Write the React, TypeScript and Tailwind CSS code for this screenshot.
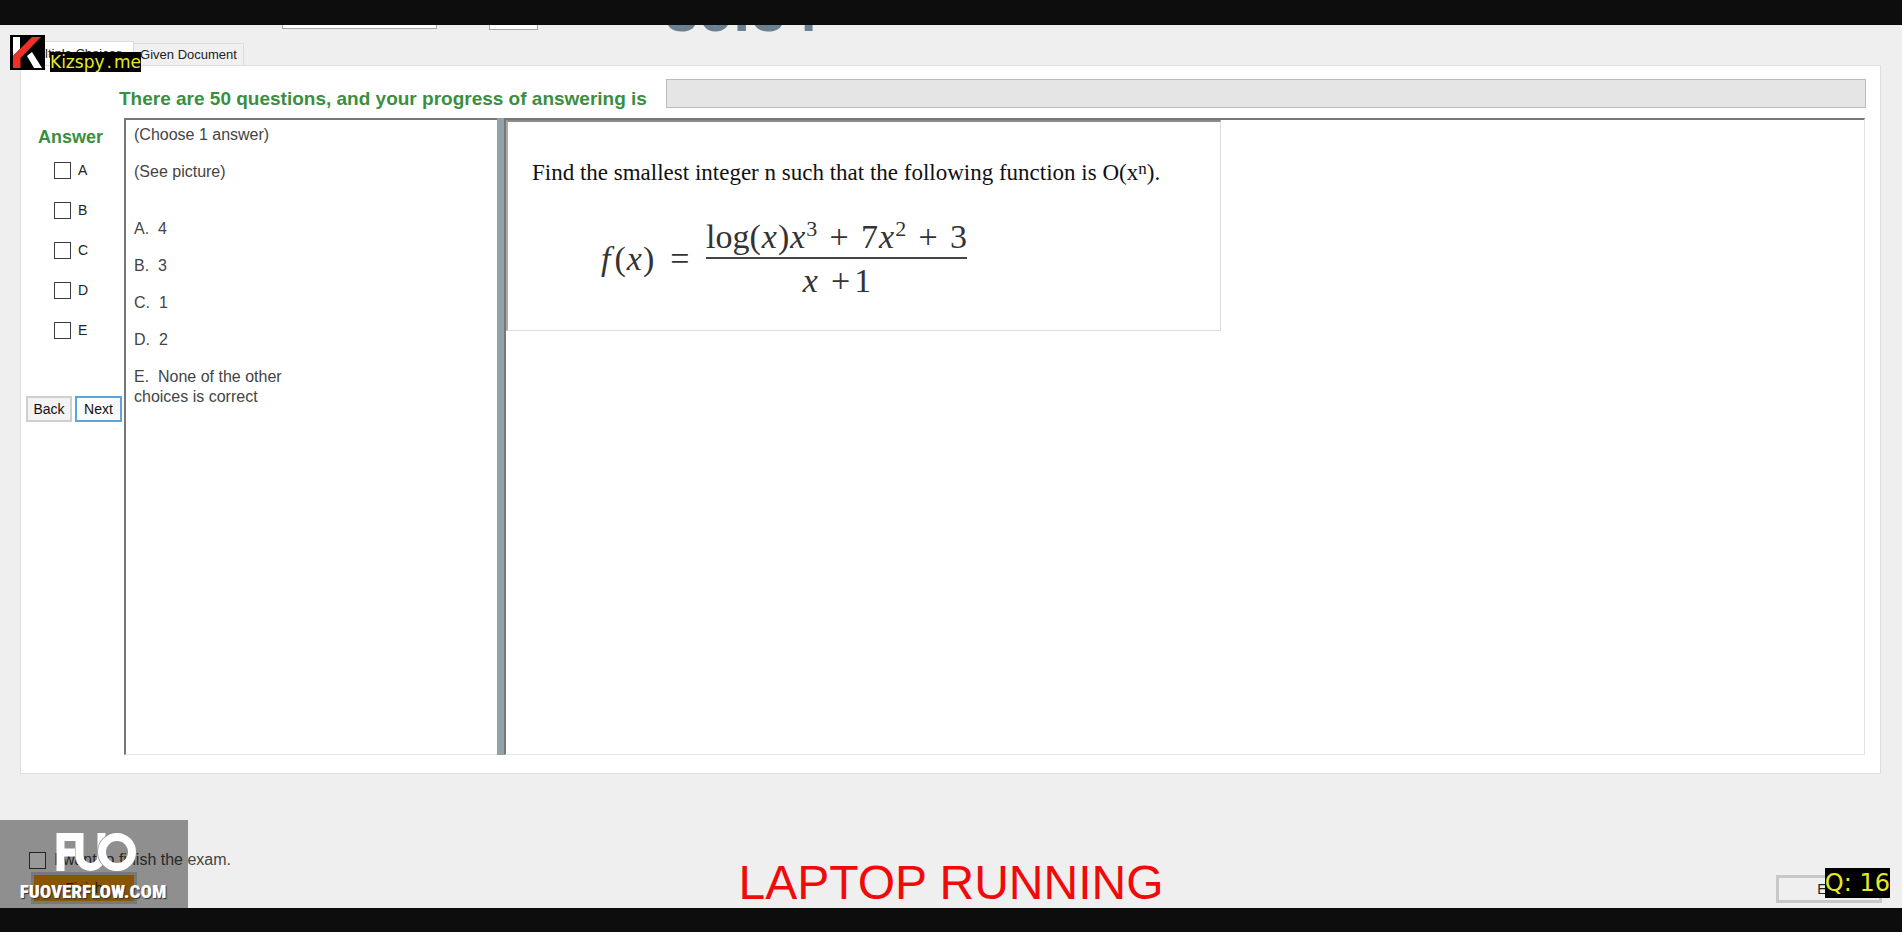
import React from "react";

const choices = ["A", "B", "C", "D", "E"];

const options = [
  "A.\u00a0 4",
  "B.\u00a0 3",
  "C.\u00a0 1",
  "D.\u00a0 2",
  "E.\u00a0 None of the other choices is correct",
];

const tick =
  "h-[17px] w-[17px] shrink-0 appearance-none border border-[#3c3c3c] bg-white checked:bg-[#3c3c3c]";

function HeaderStrip() {
  return (
    <div className="flex h-4 items-end overflow-hidden pl-[282px]">
      <select
        aria-label="Font"
        className="mb-3 h-7 w-[155px] shrink-0 appearance-none border border-[#a5a5a5] bg-white"
      />
      <select
        aria-label="Size"
        className="mb-[11px] ml-[52px] h-7 w-[49px] shrink-0 appearance-none border border-[#a5a5a5] bg-white"
      />
      <span className="ml-[127px] shrink-0 text-[60px] leading-[60px] font-bold text-[#6b8090]">
        36:34
      </span>
    </div>
  );
}

function Tabs() {
  return (
    <div role="tablist" className="flex items-end pl-5 text-[13px] leading-5 text-[#222]">
      <button
        role="tab"
        aria-selected="true"
        className="h-6 w-[114px] border border-b-0 border-[#dcdcdc] bg-white pl-1.5 text-left"
      >
        Multiple Choices
      </button>
      <button
        role="tab"
        aria-selected="false"
        className="h-[22px] w-[110px] border border-b-0 border-l-0 border-[#dcdcdc] bg-[#f0f0f0] text-center"
      >
        Given Document
      </button>
    </div>
  );
}

function AnswerColumn() {
  return (
    <div className="flex w-[103px] shrink-0 flex-col pt-2">
      <h2 className="pl-[17px] text-[18px] leading-[22px] font-bold text-[#3a8f3f]">Answer</h2>
      <div className="mt-3 flex flex-col gap-5 pl-[33px]">
        {choices.map((c) => (
          <label key={c} className="flex h-5 items-center gap-[7px] text-[14px] leading-5 text-[#222]">
            <input type="checkbox" className={tick} />
            {c}
          </label>
        ))}
      </div>
      <div className="mt-14 flex gap-[3px] pl-[5px] text-[14px] leading-5 text-[#111]">
        <button className="h-[26px] w-[46px] border-2 border-[#cfcfcf] bg-[#f3f3f3]">Back</button>
        <button className="h-[26px] w-[47px] border-2 border-[#5ba4dc] bg-[#fafafa]">Next</button>
      </div>
    </div>
  );
}

function Var() {
  return <i className="mx-px">x</i>;
}

function Formula() {
  return (
    <div className="mt-[31px] flex items-center pl-[93px] font-['Liberation_Serif',serif] text-[34px] leading-[40px] whitespace-nowrap text-[#333]">
      <span className="w-[105px]">
        <i className="mr-1">f</i>(<Var />)
        <span className="ml-4">=</span>
      </span>
      <span className="flex w-[261px] flex-col items-center">
        <span className="flex w-full items-baseline justify-between border-b-2 border-[#444]">
          <span>
            log(<Var />)<Var />
            <sup className="relative -top-3 align-baseline text-[22px] leading-none">3</sup>
          </span>
          <span>+</span>
          <span>
            7<Var />
            <sup className="relative -top-3 align-baseline text-[22px] leading-none">2</sup>
          </span>
          <span>+</span>
          <span>3</span>
        </span>
        <span className="pt-0.5">
          <Var />
          <span className="mr-1 ml-3">+</span>1
        </span>
      </span>
    </div>
  );
}

function QuestionBody() {
  return (
    <div className="flex min-h-0 flex-1 pr-[15px]">
      <AnswerColumn />
      <div className="w-[373px] shrink-0 border-t-2 border-b border-l-2 border-t-[#777] border-b-[#e3e3e3] border-l-[#777] pt-[5px] pl-2 text-[16px] leading-5 text-[#444]">
        <p>(Choose 1 answer)</p>
        <p className="mt-[17px]">(See picture)</p>
        <ol className="mt-[37px] flex max-w-[160px] flex-col gap-[17px]">
          {options.map((o) => (
            <li key={o}>{o}</li>
          ))}
        </ol>
      </div>
      <div className="w-[7px] shrink-0 bg-[#8fa3a9]" />
      <div className="flex-1 border-t-2 border-r border-b border-l-2 border-t-[#777] border-r-[#e3e3e3] border-b-[#e3e3e3] border-l-[#777]">
        <div className="h-[211px] w-[715px] border-t-2 border-r border-b border-l-2 border-t-[#8a8a8a] border-r-[#dcdcdc] border-b-[#dcdcdc] border-l-[#aaa] pt-[38px]">
          <p className="pl-6 font-['Liberation_Serif',serif] text-[23px] leading-[26px] whitespace-nowrap text-[#111]">
            Find the smallest integer n such that the following function is O(x
            <sup className="relative -top-1.5 align-baseline text-[17px] leading-none">n</sup>).
          </p>
          <Formula />
        </div>
      </div>
    </div>
  );
}

function Footer() {
  return (
    <footer className="grid h-[134px] grid-cols-[1fr_auto_1fr] items-end">
      <div className="pb-1 pl-[29px]">
        <label className="flex items-center gap-2 text-[16px] leading-5 text-[#444]">
          <input type="checkbox" className={tick} />I want to finish the exam.
        </label>
        <button className="mt-0.5 ml-0.5 block h-8 w-[106px] border-3 border-[#c8c8c8] bg-[#e68c00] text-[14px] text-[#333]">
          Finish
        </button>
      </div>
      <p className="text-[48px] leading-[50px] text-[#f00a0a]">LAPTOP RUNNING</p>
      <div className="flex justify-end pr-5 pb-[5px]">
        <button className="h-7 w-[106px] border-3 border-[#c8c8c8] bg-[#efefef] text-[14px] leading-5 text-[#222]">
          Exit
        </button>
      </div>
    </footer>
  );
}

function KizspyBadge() {
  return (
    <div className="absolute top-[35px] left-[10px] flex items-end">
      <svg width="35" height="35" viewBox="0 0 35 35" aria-hidden="true">
        <rect width="35" height="35" fill="#000" />
        <path d="M3 2h7v12l-7 7z" fill="#fff" />
        <path d="M17 21l5-4 10 16h-8z" fill="#fff" />
        <path d="M22 2h9L10.500 23v10H3V21z" fill="#ee3124" />
      </svg>
      <span className="-mb-0.5 ml-[5px] bg-black font-['DejaVu_Sans',sans-serif] text-[17px] leading-5 text-[#e8e82a]">
        Kizspy<span className="mx-0.5">.</span>me
      </span>
    </div>
  );
}

function FuoWatermark() {
  return (
    <div className="pointer-events-none absolute bottom-6 left-0 flex h-[88px] w-[188px] flex-col items-center bg-black/40 pt-3 pr-0.5">
      <svg width="80" height="40" viewBox="0 0 80 40" fill="none" stroke="#fff" strokeWidth="8" className="ml-1.5" aria-hidden="true">
        <path d="M4.500 39V5H20" />
        <path d="M4 20.500H19" />
        <path d="M23.500 1V24a11 11 0 0 0 22 0V1" />
        <circle cx="61" cy="20" r="19" stroke="#8f8f8f" strokeWidth="1.500" />
        <circle cx="61" cy="20" r="15" />
      </svg>
      <span className="mt-2 font-['Roboto_Condensed','Liberation_Sans',sans-serif] text-[19px] leading-6 font-black text-white [text-shadow:1px_1px_1px_#333]">
        FUOVERFLOW.COM
      </span>
    </div>
  );
}

export default function App() {
  return (
    <div className="relative flex min-h-screen flex-col overflow-hidden bg-[#efefef] font-['Liberation_Sans',Arial,sans-serif]">
      <div className="h-[25px] bg-[#0d0d0d]" />
      <HeaderStrip />
      <Tabs />
      <main className="mr-[21px] ml-5 flex flex-1 flex-col border border-[#dedede] bg-white pb-[18px]">
        <div className="flex h-[52px] items-center pr-3.5 pl-[98px]">
          <label
            htmlFor="progress"
            className="w-[547px] shrink-0 pt-3.5 text-[19px] leading-6 font-bold whitespace-nowrap text-[#3a8f3f]"
          >
            There are 50 questions, and your progress of answering is
          </label>
          <div
            id="progress"
            role="progressbar"
            aria-valuenow={0}
            className="mt-0.5 h-[29px] flex-1 border border-[#bcbcbc] bg-[#e5e5e5]"
          />
        </div>
        <QuestionBody />
      </main>
      <Footer />
      <div className="h-6 bg-[#0d0d0d]" />
      <KizspyBadge />
      <FuoWatermark />
      <span className="absolute right-3 bottom-[34px] bg-black font-['DejaVu_Sans',sans-serif] text-[24px] leading-[30px] text-[#e8e82a]">
        Q: 16
      </span>
    </div>
  );
}
